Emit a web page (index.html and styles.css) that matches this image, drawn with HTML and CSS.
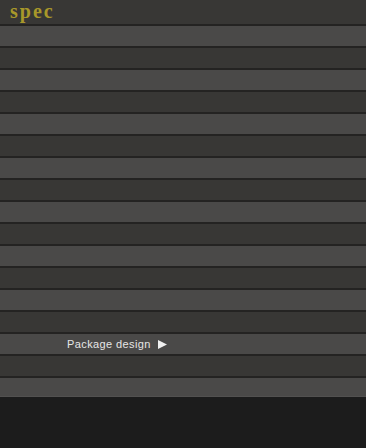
FILE: index.html
```html
<!DOCTYPE html>
<html>
<head>
<meta charset="utf-8">
<link rel="stylesheet" href="styles.css">
</head>
<body>
<div class="page">
  <div class="header"><span class="title">spec</span></div>
  <div class="row light"></div>
  <div class="row dark"></div>
  <div class="row light"></div>
  <div class="row dark"></div>
  <div class="row light"></div>
  <div class="row dark"></div>
  <div class="row light"></div>
  <div class="row dark"></div>
  <div class="row light"></div>
  <div class="row dark"></div>
  <div class="row light"></div>
  <div class="row dark"></div>
  <div class="row light"></div>
  <div class="row dark"></div>
  <div class="row light link"><span class="label">Package design</span><svg class="arrow" width="9" height="9" viewBox="0 0 9 9"><polygon points="0,0 9,4.5 0,9" fill="#f0f0f0"/></svg></div>
  <div class="row dark"></div>
  <div class="row light last"></div>
  <div class="footer"></div>
</div>
</body>
</html>
```

FILE: styles.css
```css
html, body {
  margin: 0;
  padding: 0;
  background: #1c1c1c;
}
.page {
  width: 366px;
  height: 448px;
  display: flex;
  flex-direction: column;
  overflow: hidden;
}
.header {
  height: 24px;
  background: #383735;
  display: flex;
  align-items: flex-start;
  padding-left: 10px;
  box-sizing: border-box;
  flex: none;
}
.title {
  font-family: "Liberation Serif", "Times New Roman", serif;
  font-weight: bold;
  font-size: 20px;
  line-height: 20px;
  letter-spacing: 2px;
  color: #a8982a;
  margin-top: 1px;
}
.row {
  height: 22px;
  box-sizing: border-box;
  border-top: 2px solid #242322;
  flex: none;
}
.light { background: #4a4948; }
.dark { background: #383735; }
.last { border-bottom: 1px solid #525150; height: 21px; }
.link {
  display: flex;
  align-items: center;
  padding-left: 67px;
}
.label {
  font-family: "Liberation Sans", Arial, sans-serif;
  font-size: 11px;
  letter-spacing: 0.4px;
  color: #e6e6e6;
}
.arrow {
  margin-left: 7px;
  display: block;
}
.footer {
  flex: 1;
  background: #1c1c1c;
}
```
